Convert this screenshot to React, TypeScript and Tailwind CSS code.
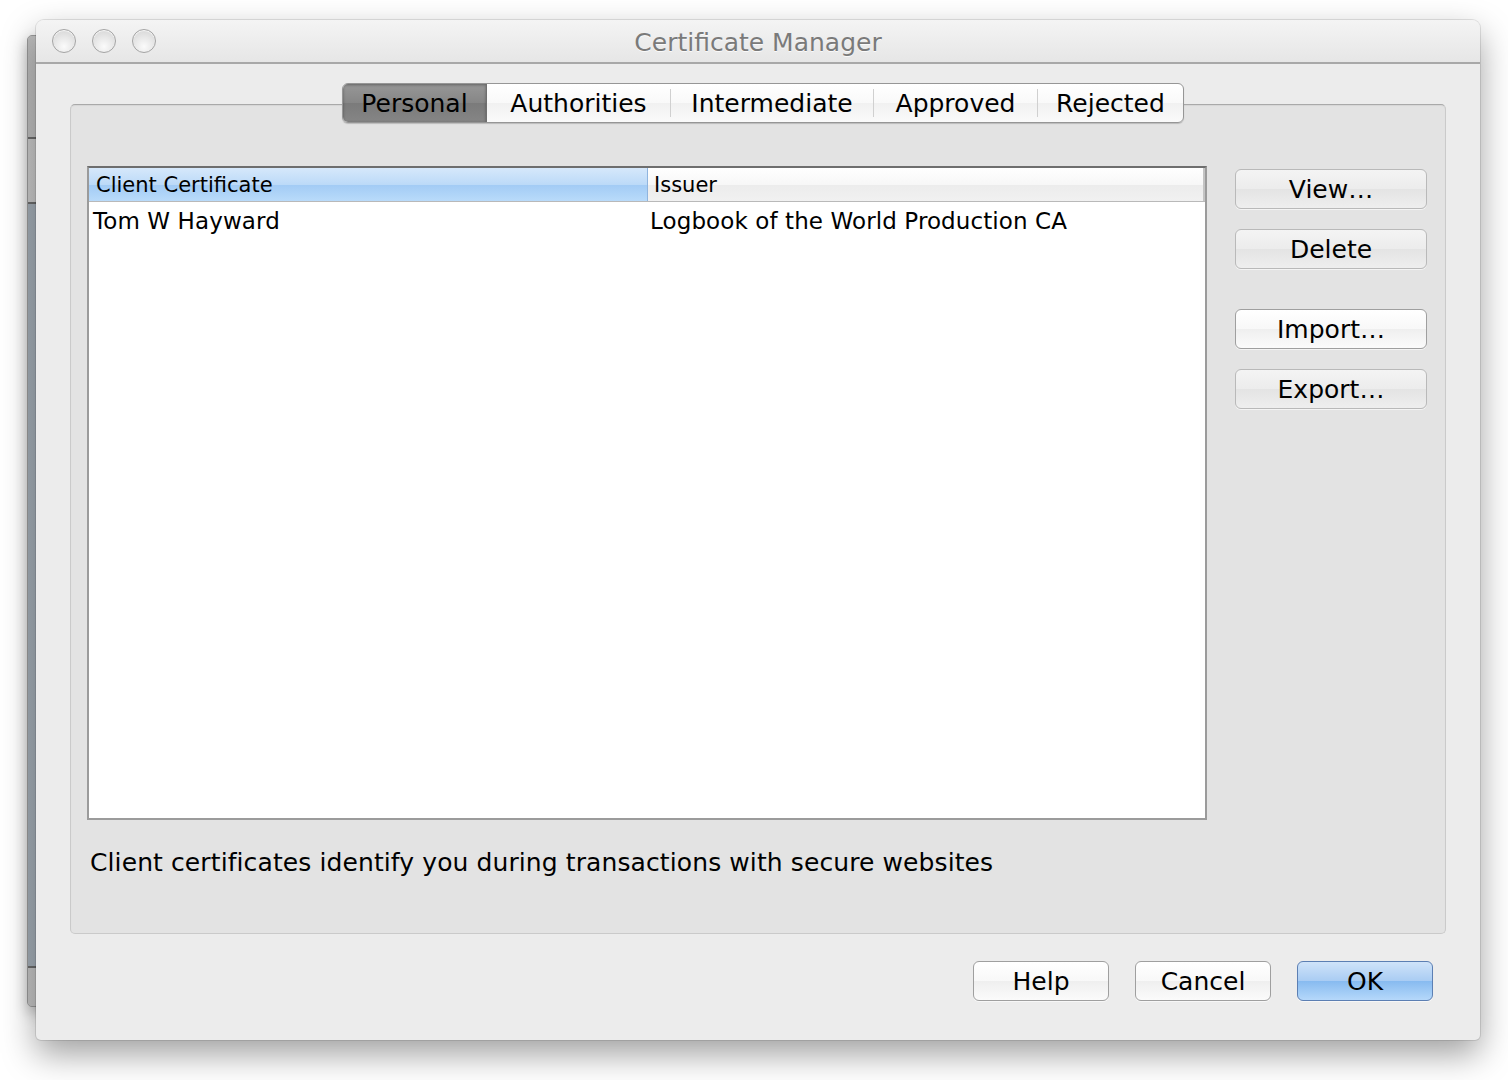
import React from 'react';

// Aqua-ish push buttons
const btnBase =
  'flex items-center justify-center rounded-[6px] border text-[25px] leading-none text-black shadow-[0_1px_0_rgba(255,255,255,0.6)]';
const btnWhite =
  'border-[#9f9f9f] bg-[linear-gradient(#ffffff,#f8f8f8_50%,#efefef_51%,#fbfbfb)]';
const btnGray =
  'border-[#b9b9b9] bg-[linear-gradient(#f4f4f4,#ececec_50%,#e4e4e4_51%,#eeeeee)]';
const btnBlue =
  'border-[#5c7fb3] bg-[linear-gradient(#cfe3f9,#a9ccf3_50%,#88bbf0_51%,#b5d8fa)]';

const tabs = [
  { label: 'Personal', w: 'w-[144px]' },
  { label: 'Authorities', w: 'w-[183px]' },
  { label: 'Intermediate', w: 'w-[202px]' },
  { label: 'Approved', w: 'w-[163px]' },
  { label: 'Rejected', w: 'w-[145px]' },
];

function TrafficLight() {
  return (
    <div className="h-[24px] w-[24px] rounded-full border border-[#a4a4a4] bg-[radial-gradient(circle_at_50%_75%,#fbfbfb,#e2e2e2_60%,#d2d2d2)] shadow-[inset_0_1px_1px_rgba(255,255,255,0.9)]" />
  );
}

export default function App() {
  return (
    <div className="relative h-[1080px] w-[1508px] overflow-hidden bg-white font-['DejaVu_Sans',sans-serif]">
      {/* window behind, only a sliver shows on the left */}
      <div className="absolute left-[27px] top-[35px] flex h-[972px] w-[30px] flex-col overflow-hidden rounded-l-[5px] border border-[#9a9a9a] bg-[#c4c4c4] shadow-[0_6px_14px_rgba(0,0,0,0.25)]">
        <div className="h-[101px] bg-[linear-gradient(90deg,#bdbdbd,#d2d2d2)]" />
        <div className="h-[2px] bg-[#6d6d6d]" />
        <div className="h-[63px] bg-[linear-gradient(90deg,#c9c9c9,#dadada)]" />
        <div className="h-[2px] bg-[#6d6d6d]" />
        <div className="flex-1 bg-[linear-gradient(90deg,#a3adb6,#b6c0c9)]" />
        <div className="h-[2px] bg-[#6d6d6d]" />
        <div className="h-[38px] bg-[linear-gradient(90deg,#c4c4c4,#d8d8d8)]" />
      </div>

      {/* main window */}
      <div className="relative z-10 ml-[36px] mt-[20px] flex h-[1020px] w-[1444px] flex-col rounded-t-[8px] rounded-b-[5px] bg-[#ececec] shadow-[0_14px_34px_rgba(0,0,0,0.38),0_0_0_1px_rgba(0,0,0,0.10)]">
        {/* title bar */}
        <div className="grid h-[44px] grid-cols-[1fr_auto_1fr] items-center rounded-t-[8px] border-b-2 border-[#a8a8a8] bg-[linear-gradient(#f4f4f4,#e6e6e6)]">
          <div className="flex items-center gap-[16px] pl-[16px]">
            <TrafficLight />
            <TrafficLight />
            <TrafficLight />
          </div>
          <div className="pt-[2px] text-[25px] leading-none text-[#7a7a7a] [text-shadow:0_1px_0_rgba(255,255,255,0.8)]">
            Certificate Manager
          </div>
          <div />
        </div>

        {/* body */}
        <div className="flex flex-1 flex-col px-[34px] pt-[19px]">
          {/* segmented tabs */}
          <div className="relative z-10 flex h-[40px] justify-center pl-[10px]">
            <div className="flex overflow-hidden rounded-[6px] border border-[#969696] bg-[linear-gradient(#ffffff,#f9f9f9_50%,#f1f1f1_51%,#fafafa)] shadow-[0_1px_1px_rgba(0,0,0,0.18)]">
              {tabs.map((t, i) => (
                <React.Fragment key={t.label}>
                  {i > 1 && <div className="my-[5px] w-px bg-[#d0d0d0]" />}
                  <div
                    className={`flex items-center justify-center text-[25px] leading-none text-black ${t.w} ${
                      i === 0
                        ? 'border-r border-[#6f6f6f] bg-[linear-gradient(#979797,#868686_50%,#7b7b7b_51%,#858585)] shadow-[inset_0_1px_3px_rgba(0,0,0,0.35)]'
                        : ''
                    }`}
                  >
                    {t.label}
                  </div>
                </React.Fragment>
              ))}
            </div>
          </div>

          {/* group box */}
          <div className="-mt-[19px] flex h-[830px] flex-col rounded-[5px] border border-[#cacaca] border-t-[#a9a9a9] bg-[#e3e3e3] px-[16px] pt-[61px] shadow-[inset_0_1px_1px_rgba(0,0,0,0.06)]">
            <div className="flex gap-[28px]">
              {/* table */}
              <div className="flex h-[654px] w-[1120px] flex-col border-2 border-[#9b9b9b] border-t-[#6e6e6e] bg-white">
                <div className="flex h-[34px] border-b border-[#b9b9b9]">
                  <div className="flex w-[559px] items-center border-r border-[#8fb4de] bg-[linear-gradient(#d6e8fb,#bcdaf8_50%,#a2cbf5_51%,#b9dbfa)] pl-[7px] pt-[1px] text-[21px] leading-none text-black">
                    Client Certificate
                  </div>
                  <div className="flex flex-1 items-center bg-[linear-gradient(#ffffff,#f7f7f7_50%,#ececec_51%,#f1f1f1)] pl-[6px] pt-[1px] text-[21px] leading-none text-black">
                    Issuer
                  </div>
                  <div className="w-[2px] bg-[#c4c4c4]" />
                </div>
                <div className="flex h-[38px] items-center text-[23px] leading-none tracking-[0.1px] text-black">
                  <div className="w-[559px] pl-[4px]">Tom W Hayward</div>
                  <div className="pl-[2px]">Logbook of the World Production CA</div>
                </div>
              </div>

              {/* side buttons */}
              <div className="mt-[3px] flex w-[192px] flex-col">
                <button className={`${btnBase} ${btnGray} h-[40px]`}>View…</button>
                <button className={`${btnBase} ${btnGray} mt-[20px] h-[40px]`}>Delete</button>
                <button className={`${btnBase} ${btnWhite} mt-[40px] h-[40px] border-[#8a8a8a]`}>Import…</button>
                <button className={`${btnBase} ${btnGray} mt-[20px] h-[40px]`}>Export…</button>
              </div>
            </div>

            <p className="mt-[27px] pl-[3px] text-[25px] leading-[32px] tracking-[0.1px] text-black">
              Client certificates identify you during transactions with secure websites
            </p>
          </div>

          {/* dialog buttons */}
          <div className="mt-[27px] flex justify-end gap-[26px] pr-[13px]">
            <button className={`${btnBase} ${btnWhite} h-[40px] w-[136px]`}>Help</button>
            <button className={`${btnBase} ${btnWhite} h-[40px] w-[136px]`}>Cancel</button>
            <button className={`${btnBase} ${btnBlue} h-[40px] w-[136px]`}>OK</button>
          </div>
        </div>
      </div>
    </div>
  );
}
